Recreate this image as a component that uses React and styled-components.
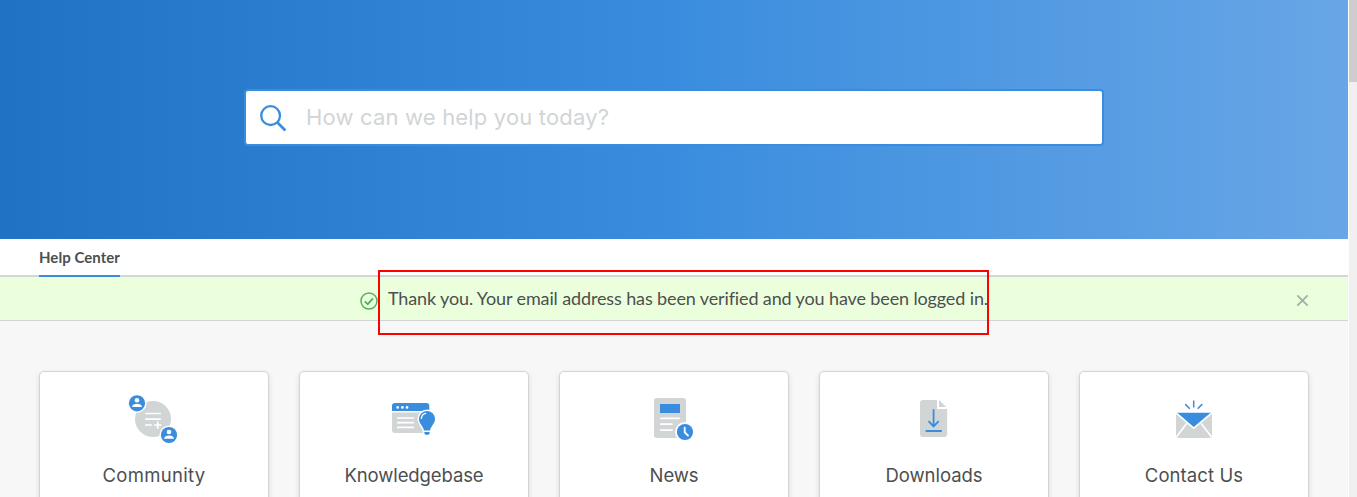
import React from "react";
import styled, { createGlobalStyle } from "styled-components";

const blue = "#3a8dde";
const grey = "#d1d5d6";

const GlobalStyle = createGlobalStyle`
  * { box-sizing: border-box; }
  body { margin: 0; overflow: hidden; background: #f7f7f7; color: #4c4f50; font-family: Lato, sans-serif; }
`;

const Window = styled.div`
  display: flex;
  height: 497px;
  overflow: hidden;
`;

const Page = styled.div`
  width: 1348px;
  flex: none;
`;

const ScrollTrack = styled.div`
  flex: 1;
  background: #f0f0f0;
  border-left: 1px solid #fff;
`;

const ScrollThumb = styled.div`
  height: 82px;
  background: #cdcdcd;
`;

const Hero = styled.header`
  height: 239px;
  padding: 89px 244px 0;
  background: linear-gradient(to right, #2073c4 0%, #3a8dde 50%, #68a6e6 100%);
`;

const SearchBox = styled.label`
  display: flex;
  align-items: center;
  width: 860px;
  height: 57px;
  padding-left: 14px;
  background: #fff;
  border: 2px solid ${blue};
  border-radius: 4px;
`;

const SearchInput = styled.input`
  flex: 1;
  margin-left: 19px;
  padding: 0 0 1px;
  border: 0;
  outline: 0;
  background: none;
  font: 22px Inter, sans-serif;
  letter-spacing: 0.17px;
  &::placeholder { color: #d1d5d6; opacity: 1; }
`;

const SearchGlyph = styled.svg`
  width: 27px;
  height: 27px;
  margin-top: 1px;
`;

const TabBar = styled.nav`
  display: flex;
  height: 38px;
  padding: 0 39px;
  background: #fff;
  border-bottom: 2px solid #d1d5d6;
`;

const Tab = styled.a`
  height: 38px;
  line-height: 37px;
  font-size: 15px;
  font-weight: 700;
  letter-spacing: 0.04px;
  border-bottom: 2px solid ${blue};
`;

const Alert = styled.div`
  display: flex;
  align-items: center;
  height: 44px;
  padding: 0 39px 0 360px;
  background: #ecffdc;
  border-bottom: 1px solid #d1d5d6;
`;

const AlertGlyph = styled.svg`
  width: 18px;
  height: 18px;
  margin-top: 5px;
`;

const Message = styled.div`
  position: relative;
  margin-left: 10px;
  font-size: 18px;
  line-height: 43px;
  letter-spacing: -0.125px;
  white-space: nowrap;
`;

const Highlight = styled.span`
  position: absolute;
  left: -10px;
  top: -7px;
  width: 611px;
  height: 65px;
  border: 2px solid #ff0000;
`;

const CloseButton = styled.button`
  display: flex;
  margin-left: auto;
  padding: 4px 0 0;
  border: 0;
  background: none;
`;

const Cards = styled.main`
  display: grid;
  grid-template-columns: repeat(5, 230px);
  gap: 30px;
  padding: 50px 39px 0;
`;

const Card = styled.a`
  display: flex;
  flex-direction: column;
  align-items: center;
  height: 170px;
  padding-top: 18px;
  background: #fff;
  border: 1px solid #d1d5d6;
  border-radius: 5px;
  box-shadow: 0 2px 5px rgba(0, 0, 0, 0.12);
`;

const CardIcon = styled.svg`
  width: 60px;
  height: 60px;
  flex: none;
`;

const CardTitle = styled.span`
  margin-top: 13px;
  font: 18.5px/24px Inter, sans-serif;
  letter-spacing: ${(p) => p.$spacing};
`;

const User = ({ x, y }) => (
  <g transform={`translate(${x} ${y})`}>
    <circle r="9.6" fill="#fff" />
    <circle r="8.1" fill={blue} />
    <circle cy="-3" r="2.3" fill="#fff" />
    <path d="M-5 3.8C-4.6 1.2-2.6.5 0 .5s4.6.7 5 3.3z" fill="#fff" />
  </g>
);

const CommunityArt = () => (
  <>
    <circle cx="29" cy="29" r="18" fill={grey} />
    <path d="M21.8 23.5h14.4M21.8 29.2h14.4M21.8 35h5.4M30.8 35h6M33.7 32v6" stroke="#fff" strokeWidth="1.7" strokeLinecap="round" />
    <User x={13} y={13.3} />
    <User x={45} y={45} />
  </>
);

const KnowledgeArt = () => (
  <>
    <path d="M8 22.5h37.3V43H11a3 3 0 0 1-3-3z" fill={grey} />
    <path d="M8 21v-5a3 3 0 0 1 3-3h31.3a3 3 0 0 1 3 3v5z" fill={blue} />
    <g fill="#fff"><circle cx="13.7" cy="17.4" r="1.3" /><circle cx="18.4" cy="17.4" r="1.3" /><circle cx="23" cy="17.4" r="1.3" /></g>
    <path d="M13.7 28h15.7M13.7 32.7h15.7M13.7 37.4h15.7" stroke="#fff" strokeWidth="1.7" strokeLinecap="round" />
    <path d="M43 21a8 8 0 0 0-8 8c0 5 4.2 6.8 5 11.6h6c.8-4.8 5-6.6 5-11.6a8 8 0 0 0-8-8z" fill="#fff" stroke="#fff" strokeWidth="3" />
    <path d="M40 40h6v5h-6z" fill="#fff" stroke="#fff" strokeWidth="2" />
    <path d="M43 21a8 8 0 0 0-8 8c0 5 4.2 6.8 5 11.6h6c.8-4.8 5-6.6 5-11.6a8 8 0 0 0-8-8zM40.4 42h5.2v1.6l-1 1.1h-3.2l-1-1.1z" fill={blue} />
    <path d="M37.4 28.4c.2-2.6 1.7-4.4 4.2-5" fill="none" stroke="#fff" strokeWidth="1.4" strokeLinecap="round" />
  </>
);

const NewsArt = () => (
  <>
    <rect x="10" y="8" width="32" height="40" rx="3" fill={grey} />
    <path d="M16 14h20v9H16z" fill={blue} />
    <path d="M16.8 28.3h18.4M16.8 34.2h11.2M16.8 40.1h11.2" stroke="#fff" strokeWidth="1.8" strokeLinecap="round" />
    <circle cx="41" cy="42" r="10" fill="#fff" />
    <circle cx="41" cy="42" r="8.1" fill={blue} />
    <path d="M40.7 37.7v4.6l3.3 3.2" fill="none" stroke="#fff" strokeWidth="1.8" strokeLinecap="round" />
  </>
);

const DownloadArt = () => (
  <>
    <path d="M19 10h14v9h10.2v25a3 3 0 0 1-3 3H19a3 3 0 0 1-3-3V13a3 3 0 0 1 3-3zM35 10l7.2 7H35z" fill={grey} />
    <path d="M29.6 19.2v17.2M24.5 31.2l5.1 5.2 5.1-5.2M21.6 41h16.2" fill="none" stroke={blue} strokeWidth="1.8" />
  </>
);

const ContactArt = () => (
  <>
    <path d="M12 23h36v22a3 3 0 0 1-3 3H15a3 3 0 0 1-3-3z" fill={grey} />
    <path d="M12 22h36l-18.3 16z" fill={blue} />
    <path d="M11.5 22.4l18.2 15.8 18.8-15.8M22.6 33.4l-10 13.4M37.2 33.4l10.2 13.4" fill="none" stroke="#fff" strokeWidth="1.7" />
    <path d="M11 22.1h38" stroke="#fff" strokeWidth="1.2" />
    <path d="M29.7 10.4v7M21.2 14.1l4.6 4.6M38.3 14.1l-4.6 4.6" stroke={blue} strokeWidth="1.5" />
  </>
);

const cards = [
  { title: "Community", Art: CommunityArt, spacing: "0.3px" },
  { title: "Knowledgebase", Art: KnowledgeArt, spacing: "-0.1px" },
  { title: "News", Art: NewsArt, spacing: "-0.1px" },
  { title: "Downloads", Art: DownloadArt, spacing: "-0.05px" },
  { title: "Contact Us", Art: ContactArt, spacing: "0.1px" },
];

export default function App() {
  return (
    <Window>
      <GlobalStyle />
      <Page>
        <Hero>
          <SearchBox>
            <SearchGlyph viewBox="0 0 27 27" fill="none" stroke={blue}>
              <circle cx="10.6" cy="10.6" r="9.4" strokeWidth="2.3" />
              <path d="M17.4 17.4l8 8" strokeWidth="2.8" />
            </SearchGlyph>
            <SearchInput placeholder="How can we help you today?" />
          </SearchBox>
        </Hero>
        <TabBar>
          <Tab>Help Center</Tab>
        </TabBar>
        <Alert>
          <AlertGlyph viewBox="0 0 18 18" fill="none" stroke="#4eb25e">
            <circle cx="9" cy="9" r="8" strokeWidth="1.5" />
            <path d="M4.8 9.3l2.9 2.8 5.3-5.7" strokeWidth="1.8" />
          </AlertGlyph>
          <Message>
            Thank you. Your email address has been verified and you have been logged in.
            <Highlight />
          </Message>
          <CloseButton aria-label="Close">
            <svg width="13" height="13" viewBox="0 0 13 13" fill="none" stroke="#a6adae" strokeWidth="1.8">
              <path d="M1.3 1.3l10.4 10.4M11.7 1.3L1.3 11.7" />
            </svg>
          </CloseButton>
        </Alert>
        <Cards>
          {cards.map(({ title, Art, spacing }) => (
            <Card key={title}>
              <CardIcon viewBox="0 0 60 60"><Art /></CardIcon>
              <CardTitle $spacing={spacing}>{title}</CardTitle>
            </Card>
          ))}
        </Cards>
      </Page>
      <ScrollTrack><ScrollThumb /></ScrollTrack>
    </Window>
  );
}
